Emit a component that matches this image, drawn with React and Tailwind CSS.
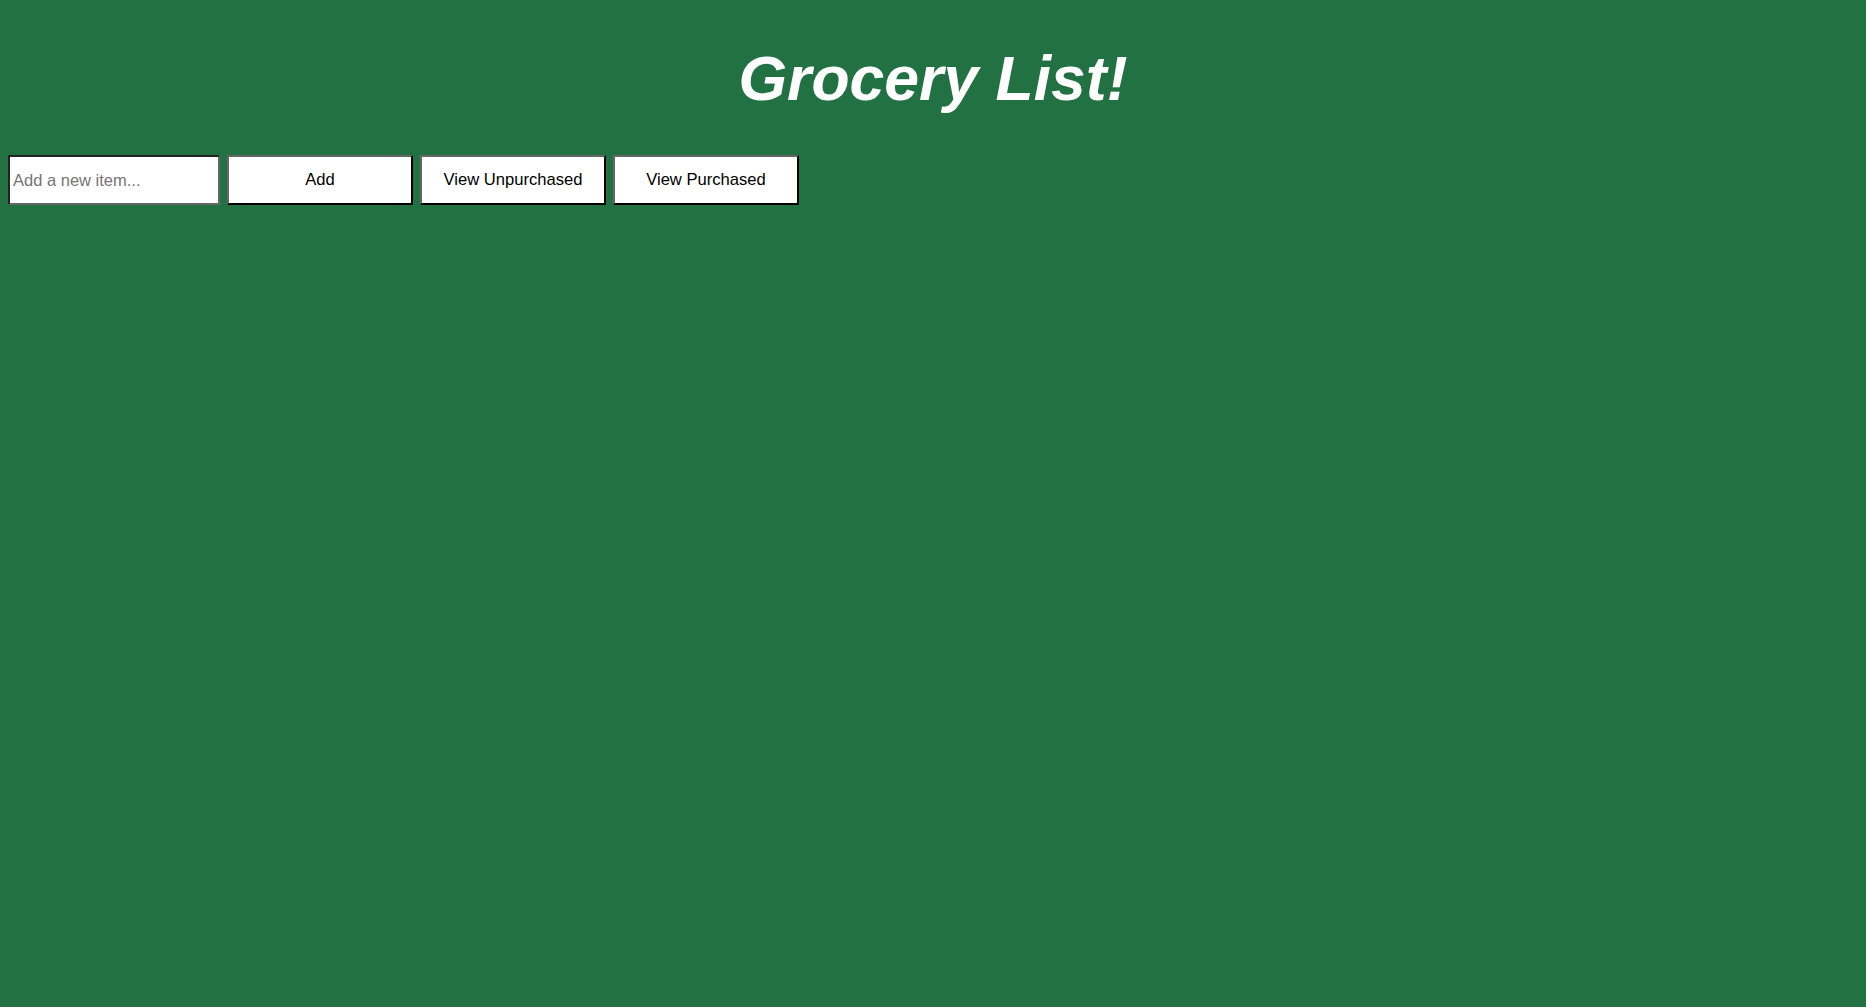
import React, { useState } from 'react';

const GroceryList = () => {
  const [item, setItem] = useState('');

  const btn =
    'w-[186px] h-[50px] bg-white text-black text-[16.6px] border-2 border-t-[#666] border-l-[#666] border-r-black border-b-black';

  return (
    <div className="min-h-[1007px] w-full bg-[#217142] font-['Liberation_Sans',Arial,sans-serif]">
      <h1 className="pt-[43px] text-center text-[62.5px] font-bold italic leading-[70px] text-white">
        Grocery List!
      </h1>
      <div className="mt-[42px] flex gap-[7px] pl-2">
        <input
          value={item}
          onChange={(e) => setItem(e.target.value)}
          placeholder="Add a new item..."
          className="w-[212px] h-[50px] bg-white pl-[3px] pr-[2px] text-[16.5px] text-black placeholder:text-[#757575] border-2 border-t-[#222] border-l-[#222] border-r-[#666] border-b-[#666] outline-none"
        />
        <button className={btn}>Add</button>
        <button className={btn}>View Unpurchased</button>
        <button className={btn}>View Purchased</button>
      </div>
    </div>
  );
};

export default GroceryList;
